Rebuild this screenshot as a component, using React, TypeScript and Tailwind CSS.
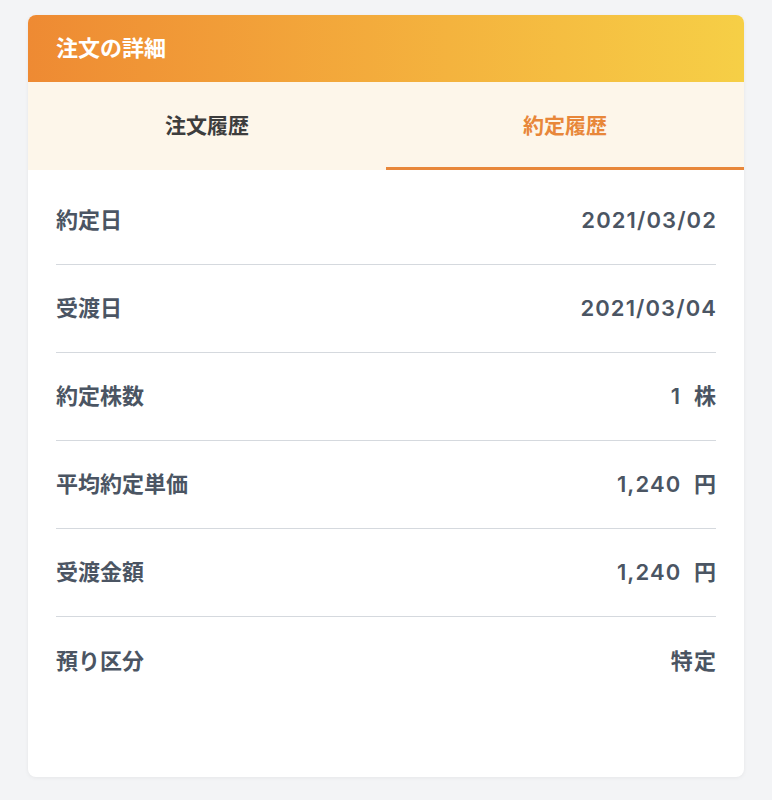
import type { FC } from 'react';

const rows: { label: string; value: string }[] = [
  { label: '約定日', value: '2021/03/02' },
  { label: '受渡日', value: '2021/03/04' },
  { label: '約定株数', value: '1 株' },
  { label: '平均約定単価', value: '1,240 円' },
  { label: '受渡金額', value: '1,240 円' },
  { label: '預り区分', value: '特定' },
];

const App: FC = () => {
  return (
    <div
      className="min-h-[800px] bg-[#f3f4f6] px-[28px] pt-[15px] pb-[23px]"
      style={{ fontFamily: 'Inter, "Noto Sans CJK JP", sans-serif' }}
    >
      <div className="bg-white rounded-[8px] overflow-hidden shadow-[0_1px_4px_rgba(0,0,0,0.06)] h-[762px] flex flex-col">
        <div className="h-[67px] flex items-center px-[28px] bg-gradient-to-r from-[#ee8a33] to-[#f6cf46]">
          <h2 className="text-white text-[22px] font-semibold">注文の詳細</h2>
        </div>

        <div className="flex bg-[#fdf6ea] h-[88px]">
          <button className="flex-1 flex items-center justify-center text-[21px] font-semibold text-[#3d3d3d]">
            注文履歴
          </button>
          <button className="flex-1 flex items-center justify-center text-[21px] font-semibold text-[#e8873a] border-b-[3px] border-[#e8873a] pt-[3px]">
            約定履歴
          </button>
        </div>

        <div className="px-[28px] pt-[7px]">
          {rows.map((row, i) => (
            <div
              key={row.label}
              className={`h-[88px] flex items-center justify-between text-[22px] font-semibold text-[#4b5563] ${
                i < rows.length - 1 ? 'border-b border-[#d5d9de]' : ''
              }`}
            >
              <span>{row.label}</span>
              <span className="tracking-[0.05em] mr-[-1px] [word-spacing:6px]">{row.value}</span>
            </div>
          ))}
        </div>
      </div>
    </div>
  );
};

export default App;
